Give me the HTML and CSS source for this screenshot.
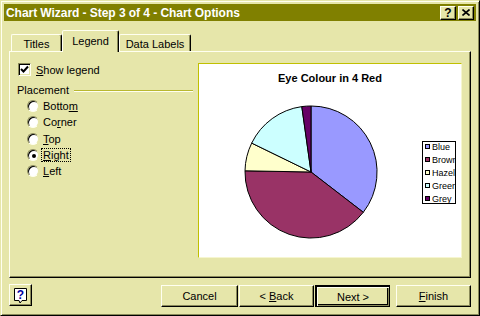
FILE: index.html
```html
<!DOCTYPE html>
<html lang="en">
<head>
  <meta charset="UTF-8">
  <title>Chart Wizard - Step 3 of 4 - Chart Options</title>
  <link rel="stylesheet" href="styles.css">
</head>
<body>

<div class="window">
  <div class="titlebar">
    <span class="title">Chart Wizard - Step 3 of 4 - Chart Options</span>
    <div class="capbtn q">?</div>
    <div class="capbtn x">
      <svg width="8" height="7" viewBox="0 0 8 7"><path d="M0.5 0.5 L7.5 6.5 M7.5 0.5 L0.5 6.5" stroke="#000" stroke-width="1.6"/></svg>
    </div>
  </div>

  <div class="tabs">
    <div class="tab t1">Titles</div>
    <div class="tab t2 active">Legend</div>
    <div class="tab t3">Data Labels</div>
  </div>

  <div class="panel">
    <div class="options">
      <div class="check-row">
        <span class="checkbox">
          <svg width="9" height="9" viewBox="0 0 9 9"><path d="M1 4 L3.5 6.5 L8 1.5" fill="none" stroke="#000" stroke-width="2"/></svg>
        </span>
        <span><u>S</u>how legend</span>
      </div>

      <div class="group-title">
        <span>Placement</span>
        <span class="group-line"></span>
      </div>

      <div class="radios">
        <div class="radio-row"><span class="radio"></span><span>Botto<u>m</u></span></div>
        <div class="radio-row"><span class="radio"></span><span>Co<u>r</u>ner</span></div>
        <div class="radio-row"><span class="radio"></span><span><u>T</u>op</span></div>
        <div class="radio-row"><span class="radio on"></span><span class="focus"><u>R</u>ight</span></div>
        <div class="radio-row"><span class="radio"></span><span><u>L</u>eft</span></div>
      </div>
    </div>

    <div class="chart">
      <svg width="262" height="193" viewBox="0 0 262 193">
        <defs>
          <clipPath id="legclip"><rect x="223" y="77" width="34" height="63"/></clipPath>
        </defs>
        <text x="131" y="18" class="chart-title" text-anchor="middle">Eye Colour in 4 Red</text>
        <g stroke="#000" stroke-width="1">
          <path d="M112 108 L112 42 A66 66 0 0 1 164.3 148.3 Z" fill="#9999ff"/>
          <path d="M112 108 L164.3 148.3 A66 66 0 0 1 46 106.8 Z" fill="#993366"/>
          <path d="M112 108 L46 106.8 A66 66 0 0 1 52.7 79.1 Z" fill="#ffffcc"/>
          <path d="M112 108 L52.7 79.1 A66 66 0 0 1 102.8 42.6 Z" fill="#ccffff"/>
          <path d="M112 108 L102.8 42.6 A66 66 0 0 1 112 42 Z" fill="#660066"/>
        </g>
        <rect x="223.5" y="77.5" width="33" height="62" fill="#fff" stroke="#000"/>
        <g stroke="#000" stroke-width="1">
          <rect x="226.5" y="80.5" width="4" height="4" fill="#9999ff"/>
          <rect x="226.5" y="93.5" width="4" height="4" fill="#993366"/>
          <rect x="226.5" y="106.5" width="4" height="4" fill="#ffffcc"/>
          <rect x="226.5" y="119.5" width="4" height="4" fill="#ccffff"/>
          <rect x="226.5" y="132.5" width="4" height="4" fill="#660066"/>
        </g>
        <g class="legend-text" clip-path="url(#legclip)">
          <text x="233" y="86">Blue</text>
          <text x="233" y="99">Brown</text>
          <text x="233" y="112">Hazel</text>
          <text x="233" y="125">Green</text>
          <text x="233" y="138">Grey</text>
        </g>
      </svg>
    </div>
  </div>

  <div class="footer">
    <div class="btn help">
      <svg width="15" height="17" viewBox="0 0 15 17">
        <path d="M1.5 1.5 H13.5 V13.5 H9 L7 16 L6 13.5 H1.5 Z" fill="#fff" stroke="#000"/>
        <text x="7.5" y="12" class="help-q" text-anchor="middle">?</text>
      </svg>
    </div>
    <div class="btn cancel">Cancel</div>
    <div class="btn back"><span>&lt;&nbsp;<u>B</u>ack</span></div>
    <div class="btn next default">Next &gt;</div>
    <div class="btn finish"><u>F</u>inish</div>
  </div>
</div>

</body>
</html>
```

FILE: styles.css
```css
body {
  margin: 0;
  font-family: "Liberation Sans", Arial, sans-serif;
  font-size: 11px;
  color: #000;
}
.window {
  width: 480px;
  height: 316px;
  box-sizing: border-box;
  background: #e6e6aa;
  border: 1px solid;
  border-color: #e6e6aa #000 #000 #e6e6aa;
  box-shadow: inset 1px 1px #fffff0, inset -1px -1px #8a8a5a;
  padding: 3px;
}
.titlebar {
  height: 17px;
  background: #808000;
  display: flex;
  align-items: center;
  padding: 0 2px 0 2px;
}
.title {
  flex: 1;
  color: #fff;
  font-weight: bold;
  font-size: 12px;
  letter-spacing: -0.05px;
}
.capbtn {
  width: 14px;
  height: 12px;
  background: #e6e6aa;
  border: 1px solid;
  border-color: #fffff0 #000 #000 #fffff0;
  box-shadow: inset -1px -1px #8a8a5a;
  display: flex;
  align-items: center;
  justify-content: center;
  font-weight: bold;
  font-size: 12px;
  line-height: 12px;
}
.capbtn.x {
  margin-left: 2px;
}

/* tabs */
.tabs {
  display: flex;
  align-items: flex-end;
  height: 21px;
  margin-top: 9px;
  padding-left: 7px;
  position: relative;
  z-index: 1;
}
.tab {
  height: 17px;
  box-sizing: border-box;
  border: 1px solid;
  border-bottom: none;
  border-color: #fffff0 #000 transparent #fffff0;
  box-shadow: inset -1px 0 #8a8a5a;
  border-radius: 2px 2px 0 0;
  display: flex;
  align-items: center;
  justify-content: center;
  padding-top: 1px;
}
.t1 { width: 51px; }
.t2 { width: 57px; }
.t3 { width: 72px; }
.tab.active {
  height: 22px;
  margin-bottom: -1px;
  background: #e6e6aa;
  padding-bottom: 2px;
}

.panel {
  margin-left: 5px;
  width: 462px;
  height: 227px;
  box-sizing: border-box;
  border: 1px solid;
  border-color: #fffff0 #000 #000 #fffff0;
  box-shadow: inset -1px -1px #8a8a5a;
  display: flex;
  align-items: flex-start;
  padding: 11px 0 0 8px;
}

.options {
  width: 175px;
}
.check-row {
  display: flex;
  align-items: center;
  gap: 5px;
  height: 13px;
}
.checkbox {
  width: 13px;
  height: 13px;
  box-sizing: border-box;
  border: 1px solid;
  border-color: #8a8a5a #fffff0 #fffff0 #8a8a5a;
  box-shadow: inset 1px 1px #000, inset -1px -1px #e6e6aa;
  background: #fff;
  display: flex;
  align-items: center;
  justify-content: center;
}
.group-title {
  display: flex;
  align-items: center;
  margin-top: 7px;
  height: 13px;
  margin-left: -1px;
}
.group-line {
  flex: 1;
  height: 0;
  border-top: 1px solid #b8b830;
  border-bottom: 1px solid #fffff0;
  margin-left: 5px;
  margin-top: 2px;
}
.radios {
  margin-top: 2px;
  padding-left: 9px;
}
.radio-row {
  display: flex;
  align-items: center;
  gap: 4px;
  height: 16.3px;
}
.radio {
  width: 12px;
  height: 12px;
  box-sizing: border-box;
  border-radius: 50%;
  background: #fff;
  border: 1px solid;
  border-color: #8a8a5a #e6e6aa #fffff0 #8a8a5a;
  box-shadow: inset 1px 1px #000;
  display: flex;
  align-items: center;
  justify-content: center;
}
.radio.on::after {
  content: "";
  width: 4px;
  height: 4px;
  border-radius: 50%;
  background: #000;
  margin: 1px 0 0 1px;
}
.focus {
  outline: 1px dotted #000;
  padding: 0 1px;
  margin-left: -1px;
}

.chart {
  margin-left: 5px;
  width: 264px;
  height: 195px;
  box-sizing: border-box;
  border: 1px solid;
  border-color: #c0c000 #f6f6d0 #f6f6d0 #c0c000;
  background: #fff;
  display: flex;
}
.chart-title {
  font-family: "Liberation Sans", Arial, sans-serif;
  font-weight: bold;
  font-size: 11px;
}
.legend-text {
  font-family: "Liberation Sans", Arial, sans-serif;
  font-size: 9px;
}

/* buttons */
.footer {
  display: flex;
  margin-top: 7px;
  padding: 0 5px;
}
.btn {
  height: 22px;
  box-sizing: border-box;
  border: 1px solid;
  border-color: #fffff0 #000 #000 #fffff0;
  box-shadow: inset -1px -1px #8a8a5a;
  display: flex;
  align-items: center;
  justify-content: center;
}
.help {
  width: 23px;
  margin-top: -1px;
}
.help-q {
  font-family: "Liberation Sans", Arial, sans-serif;
  font-weight: bold;
  font-size: 12px;
  fill: #0000a0;
}
.cancel {
  width: 77px;
  margin-left: auto;
}
.back {
  width: 75px;
  margin-left: 1px;
}
.next {
  width: 75px;
  margin-left: 1px;
}
.btn.default {
  outline: 1px solid #000;
  outline-offset: -1px;
  border-width: 2px 1px 1px 2px;
  border-color: #000;
  box-shadow: inset 1px 1px #fffff0, inset -1px -1px #8a8a5a, inset -2px -2px #000;
}
.finish {
  width: 75px;
  margin-left: 6px;
}
```
